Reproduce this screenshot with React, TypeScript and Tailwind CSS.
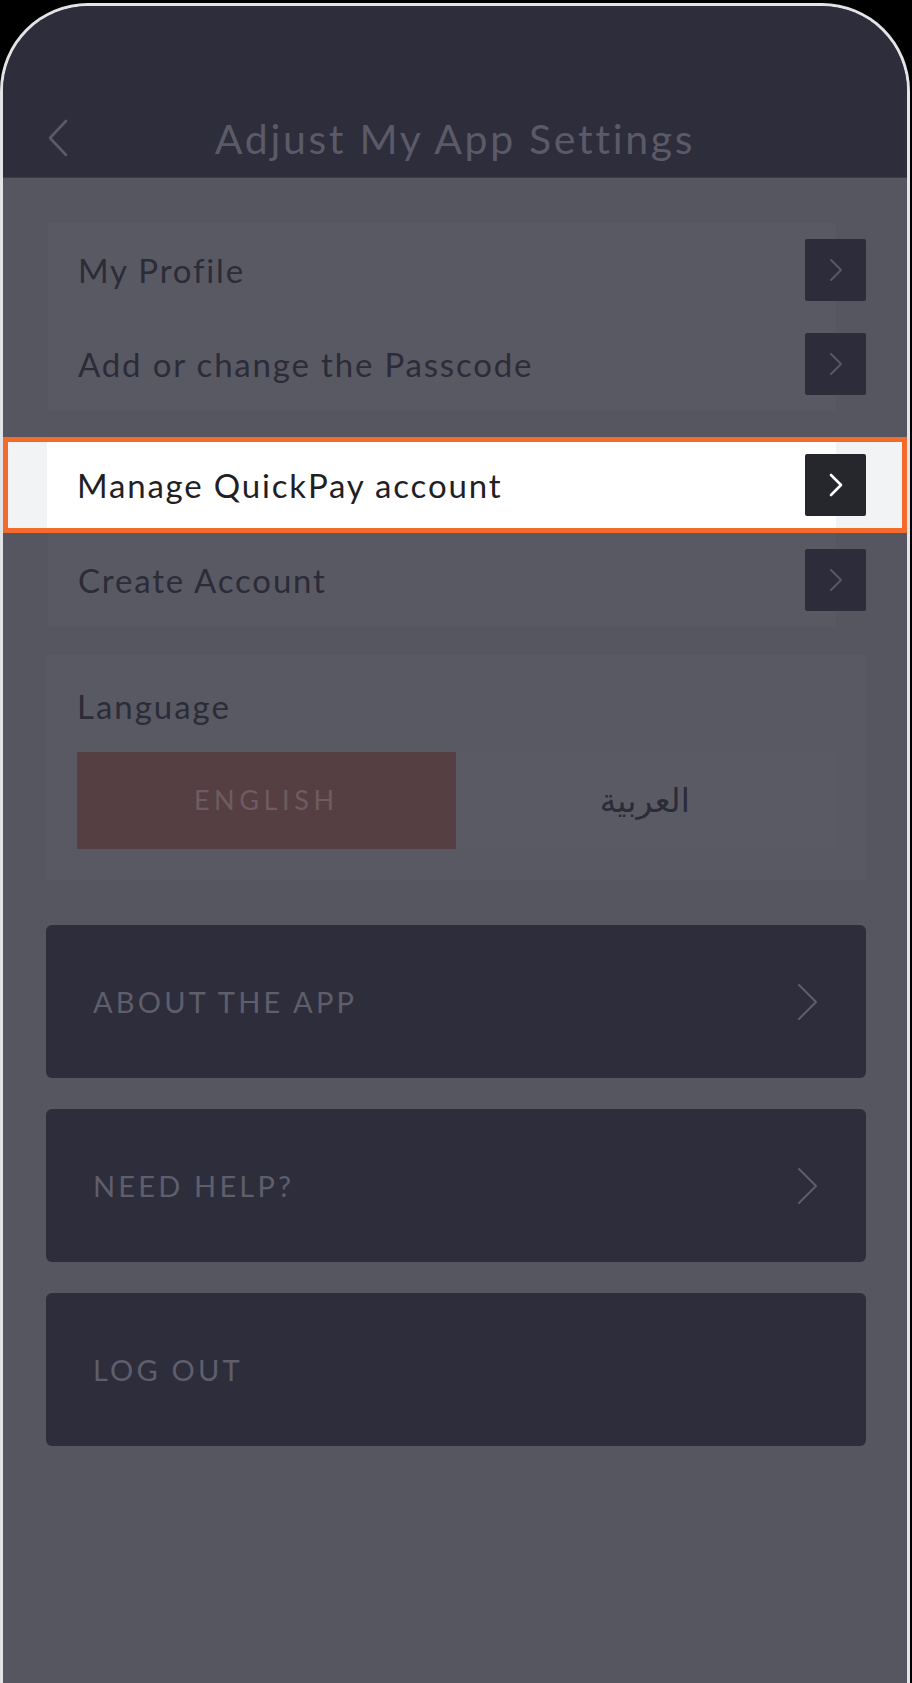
import React from "react";

const font = { fontFamily: "Lato, 'Open Sans', sans-serif" };

function SmallChevron({ color, width = 2 }: { color: string; width?: number }) {
  return (
    <svg width="16" height="24" viewBox="0 0 16 24" fill="none">
      <polyline points="3,2 13,12 3,22" stroke={color} strokeWidth={width} strokeLinecap="round" strokeLinejoin="round" />
    </svg>
  );
}

function Row({ label, highlight = false }: { label: string; highlight?: boolean }) {
  return (
    <div className={`flex items-center ${highlight ? "h-[86px]" : "h-[94px]"}`}>
      <div
        className={`flex-1 h-full flex items-center pl-[30px] mr-[-31px] ${
          highlight ? "bg-white text-[#1f1f25]" : "bg-[#595964] text-[#2c2b38]"
        }`}
      >
        <span className="text-[33px] tracking-[0.055em] leading-none">{label}</span>
      </div>
      <div
        className={`relative w-[61px] h-[62px] rounded-[2px] flex items-center justify-center ${
          highlight ? "bg-[#26272c]" : "bg-[#2d2c3a]"
        }`}
      >
        <SmallChevron color={highlight ? "#ffffff" : "#5a5967"} width={highlight ? 2.6 : 1.8} />
      </div>
    </div>
  );
}

function BigCard({ label, chevron = true }: { label: string; chevron?: boolean }) {
  return (
    <div className="h-[153px] rounded-[6px] bg-[#2e2d3b] flex items-center justify-between pl-[47px] pr-[47px]">
      <span className="text-[29px] tracking-[0.11em] text-[#5f5e6c] uppercase">{label}</span>
      {chevron && (
        <svg width="22" height="38" viewBox="0 0 22 38" fill="none">
          <polyline points="2,2 19,19 2,36" stroke="#5f5e6c" strokeWidth="2" strokeLinecap="round" strokeLinejoin="round" />
        </svg>
      )}
    </div>
  );
}

export default function App() {
  return (
    <div className="min-h-[1683px] bg-black pt-[3px]" style={font}>
      <div className="w-[910px] h-[1680px] rounded-t-[88px] border-[3px] border-b-0 border-[#e4e4e8] bg-[#565661] overflow-hidden flex flex-col">
        {/* Header */}
        <div className="h-[172px] bg-[#2e2d3b] flex flex-col justify-end border-b border-[#3b3a47]">
          <div className="h-[78px] grid grid-cols-[1fr_auto_1fr] items-center">
            <div className="pl-[44px] flex items-center">
              <svg width="22" height="38" viewBox="0 0 22 38" fill="none">
                <polyline points="19,2 3,19 19,36" stroke="#5b5a68" strokeWidth="2.6" strokeLinecap="round" strokeLinejoin="round" />
              </svg>
            </div>
            <h1 className="text-[41px] tracking-[0.065em] text-[#5b5a68] leading-none">Adjust My App Settings</h1>
            <div />
          </div>
        </div>

        {/* Content */}
        <div className="flex flex-col pt-[45px]">
          <div className="ml-[45px] mr-[41px]">
            <Row label="My Profile" />
            <Row label="Add or change the Passcode" />
          </div>
          <div className="mt-[26px] border-[5px] border-[#f26b2d] bg-[#f2f3f5] pl-[39px] pr-[36px]">
            <Row label="Manage QuickPay account" highlight />
          </div>
          <div className="ml-[45px] mr-[41px]">
            <Row label="Create Account" />
          </div>

          {/* Language */}
          <div className="mt-[28px] ml-[43px] mr-[41px] bg-[#595964] pt-[32px] pb-[31px] pl-[31px] pr-[32px]">
            <div className="text-[33px] tracking-[0.06em] leading-[38px] text-[#2c2b38]">Language</div>
            <div className="mt-[27px] h-[97px] grid grid-cols-2 bg-[#5a5a65]">
              <div className="bg-[#553f42] flex items-center justify-center">
                <span className="text-[27px] tracking-[0.17em] text-[#6d5c62]">ENGLISH</span>
              </div>
              <div className="flex items-center justify-center">
                <span
                  className="text-[33px] text-[#2c2b38]"
                  style={{ fontFamily: "'DejaVu Sans', sans-serif" }}
                  dir="rtl"
                >
                  العربية
                </span>
              </div>
            </div>
          </div>

          {/* Cards */}
          <div className="mt-[45px] ml-[43px] mr-[41px] flex flex-col gap-[31px]">
            <BigCard label="About the app" />
            <BigCard label="Need help?" />
            <BigCard label="Log out" chevron={false} />
          </div>
        </div>
      </div>
    </div>
  );
}
